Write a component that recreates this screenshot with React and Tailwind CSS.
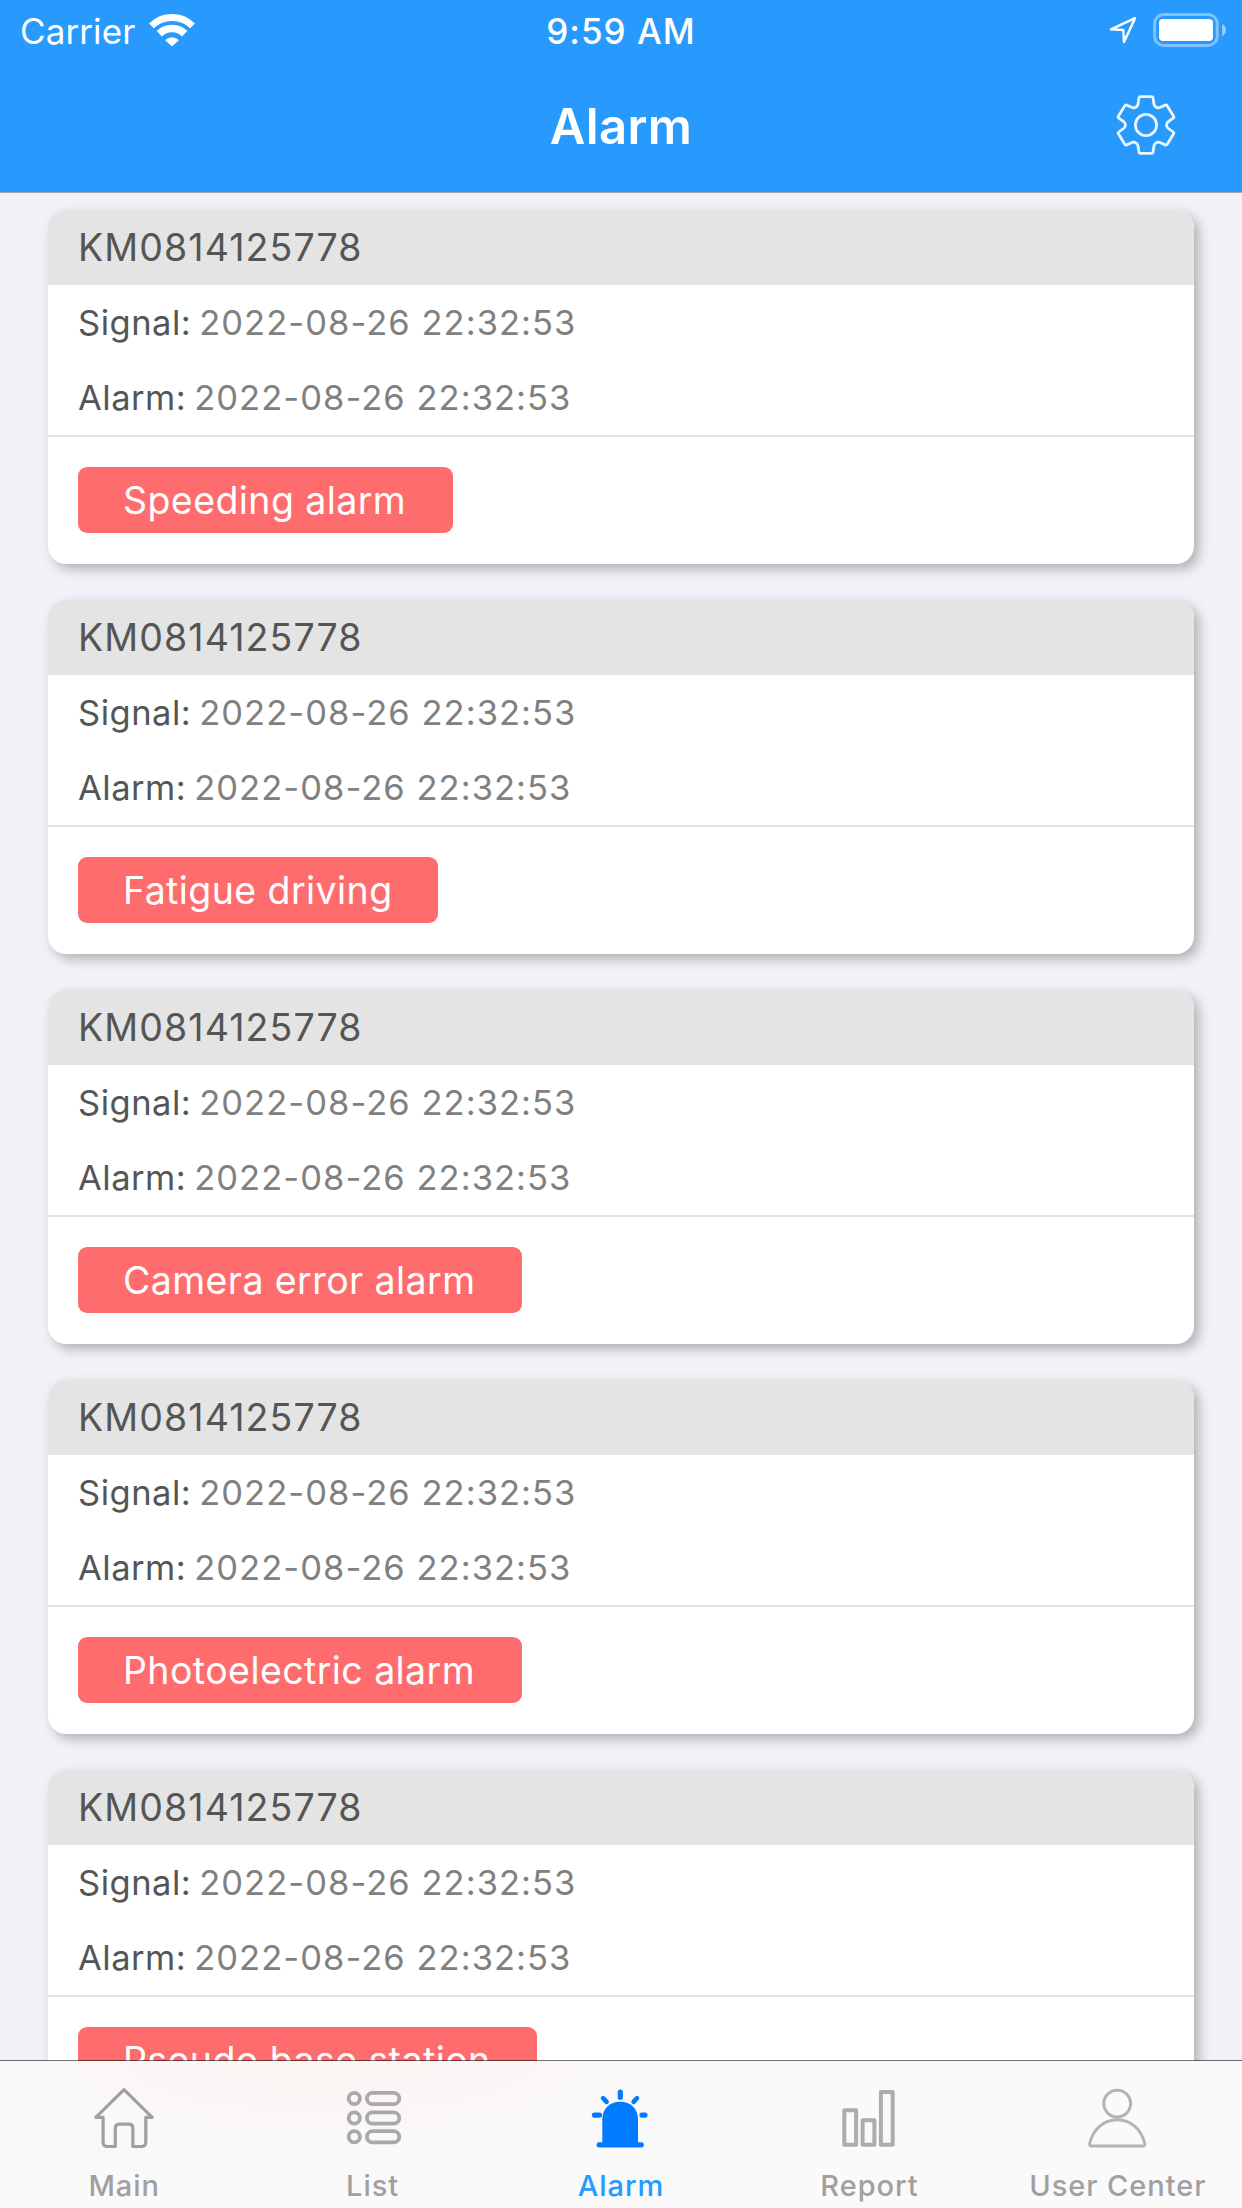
import React from "react";

const alarms = [
  { id: 1, device: "KM0814125778", signal: "2022-08-26 22:32:53", alarm: "2022-08-26 22:32:53", type: "Speeding alarm", width: "w-[375px]" },
  { id: 2, device: "KM0814125778", signal: "2022-08-26 22:32:53", alarm: "2022-08-26 22:32:53", type: "Fatigue driving", width: "w-[360px]" },
  { id: 3, device: "KM0814125778", signal: "2022-08-26 22:32:53", alarm: "2022-08-26 22:32:53", type: "Camera error alarm", width: "w-[444px]" },
  { id: 4, device: "KM0814125778", signal: "2022-08-26 22:32:53", alarm: "2022-08-26 22:32:53", type: "Photoelectric alarm", width: "w-[444px]" },
  { id: 5, device: "KM0814125778", signal: "2022-08-26 22:32:53", alarm: "2022-08-26 22:32:53", type: "Pseudo base station", width: "w-[459px]" },
];

/* ---------- Status bar icons ---------- */

const WifiIcon = () => (
  <svg className="w-[46px] h-[34px]" viewBox="0 0 46 34" fill="none" stroke="white">
    <path d="M2.4 12.9A29.4 29.4 0 0 1 43.6 12.9" strokeWidth="6.8" />
    <path d="M10.3 20.8A18 18 0 0 1 35.7 20.8" strokeWidth="7.6" />
    <path d="M16.6 27.2A9.8 9.8 0 0 1 29.4 27.2L23 33Z" fill="white" strokeWidth="0.8" strokeLinejoin="round" />
  </svg>
);

const LocationIcon = () => (
  <svg className="w-7 h-7" viewBox="0 0 28 28" fill="none" stroke="white" strokeWidth="2.4" strokeLinejoin="round">
    <path d="M26 2.2L2 13.4L14.3 14L15 26Z" />
  </svg>
);

const BatteryIcon = () => (
  <svg className="w-[74px] h-[34px]" viewBox="0 0 74 34">
    <rect x="1.6" y="1.6" width="62.6" height="30.8" rx="9" fill="none" stroke="white" strokeOpacity="0.4" strokeWidth="3" />
    <rect x="6" y="6" width="54" height="22" rx="4" fill="white" />
    <path d="M69 11C74.3 12.6 74.3 21.4 69 23Z" fill="white" fillOpacity="0.5" />
  </svg>
);

const GearIcon = () => (
  <svg className="w-[60px] h-[60px]" viewBox="0 0 60 60" fill="none" stroke="white" strokeWidth="2.8" strokeOpacity="0.9" strokeLinejoin="round">
    <path d="M24.3 1.6H35.7Q36.8 1.6 37 2.8L38 9.3Q38.3 11 39.8 11.9Q41.5 13.3 43.3 12.7L49.3 10.1Q50.5 9.7 51.2 10.8L57.6 21.3Q58.2 22.4 57.2 23.2L51.8 27Q50.6 28 50.6 30Q50.6 32 51.8 33L57.2 37Q58.2 37.8 57.6 38.8L51.2 49.3Q50.5 50.3 49.3 49.9L43.3 47.3Q41.5 46.7 39.8 48.1Q38.3 49 38 50.7L37 57.2Q36.8 58.4 35.7 58.4H24.3Q23.2 58.4 23 57.2L22 50.7Q21.7 49 20.2 48.1Q18.5 46.7 16.7 47.3L10.7 49.9Q9.5 50.3 8.8 49.3L2.4 38.8Q1.8 37.8 2.8 37L8.2 33Q9.4 32 9.4 30Q9.4 28 8.2 27L2.8 23.2Q1.8 22.4 2.4 21.3L8.8 10.8Q9.5 9.7 10.7 10.1L16.7 12.7Q18.5 13.3 20.2 11.9Q21.7 11 22 9.3L23 2.8Q23.2 1.6 24.3 1.6Z" />
    <circle cx="30" cy="30" r="10.6" />
  </svg>
);

/* ---------- Tab bar icons ---------- */

const HomeIcon = () => (
  <svg className="w-[60px] h-[60px]" viewBox="0 0 60 60" fill="none" stroke="#a0a0a0" strokeWidth="3.2" strokeLinejoin="round">
    <path d="M9.1 29.3H1.8L30 1.7L58.2 29.3H51.8V54Q51.8 58.5 47.3 58.5H38.9V40.5Q38.9 36.2 34.6 36.2H25.6Q21.3 36.2 21.3 40.5V58.5H13.6Q9.1 58.5 9.1 54Z" />
  </svg>
);

const ListIcon = () => (
  <svg className="w-[60px] h-[60px]" viewBox="0 0 60 60" fill="none" stroke="#a9a9a9" strokeWidth="3.8">
    {[10.5, 30, 48.7].map((y) => (
      <g key={y}>
        <circle cx="11.3" cy={y} r="5.6" />
        <rect x="23.9" y={y - 5.6} width="32.4" height="11.2" rx="5.6" />
      </g>
    ))}
  </svg>
);

const SirenIcon = () => (
  <svg className="w-[60px] h-[60px]" viewBox="0 0 60 60" fill="#007aff" stroke="#007aff" strokeLinecap="round">
    <path stroke="none" d="M11.3 55V31.5C11.3 21 18.5 13.7 29.2 13.7S47 21 47 31.5V55Z" />
    <rect stroke="none" x="5.6" y="54.2" width="47.2" height="5.4" rx="2.4" />
    <path strokeWidth="5.2" d="M29.3 4.2V9.2M3.4 27.1H8.5M51 27.1H54" />
    <path strokeWidth="4.6" d="M12.1 10.2L15.6 13.8M46 10.2L42.6 13.8" />
  </svg>
);

const ReportIcon = () => (
  <svg className="w-[60px] h-[60px]" viewBox="0 0 60 60" fill="none" stroke="#adadad" strokeWidth="4" strokeLinejoin="round">
    <rect x="5.3" y="22.3" width="11.8" height="34.5" />
    <rect x="23.6" y="32.2" width="11.8" height="24.6" />
    <rect x="41.9" y="4" width="11.8" height="52.8" />
  </svg>
);

const UserIcon = () => (
  <svg className="w-[60px] h-[60px]" viewBox="0 0 60 60" fill="none" stroke="#b4b4b4" strokeWidth="3" strokeLinejoin="round">
    <circle cx="29.2" cy="15.6" r="13.4" />
    <path d="M1.7 55.5C5 41.5 15.5 31.8 29.2 31.8S53.4 41.5 56.7 55.5Q57.2 58.1 54.8 58.1H3.6Q1.2 58.1 1.7 55.5Z" />
  </svg>
);

const tabs = [
  { name: "Main", Icon: HomeIcon },
  { name: "List", Icon: ListIcon },
  { name: "Alarm", Icon: SirenIcon, active: true },
  { name: "Report", Icon: ReportIcon },
  { name: "User Center", Icon: UserIcon },
];

function AlarmCard({ item }) {
  return (
    <article className="h-[354px] shrink-0 rounded-[18px] bg-white shadow-[5px_5px_12px_rgba(0,0,0,0.27)]">
      <h2 className="h-[75px] flex items-center pl-[30px] pt-[2px] rounded-t-[18px] bg-[#e4e4e4] text-[37.5px] tracking-[1.1px] text-[#555]">
        {item.device}
      </h2>
      <div className="border-b-2 border-[#e4e4e4] pl-[30px] text-[34.5px]">
        <p className="h-[75px] flex items-center gap-2">
          <span className="text-[#555] tracking-[0.5px]">Signal:</span>
          <span className="text-[#808080] tracking-[1.05px]">{item.signal}</span>
        </p>
        <p className="h-[75px] flex items-center gap-2">
          <span className="text-[#555] tracking-[0.5px]">Alarm:</span>
          <span className="text-[#808080] tracking-[1.05px]">{item.alarm}</span>
        </p>
      </div>
      <div className="pt-[30px] pl-[30px]">
        <div className={`h-[66px] flex items-center pl-[45px] pt-[2px] rounded-[9px] bg-[#ff6c6e] text-white text-[37.5px] tracking-[0.42px] whitespace-nowrap ${item.width}`}>
          {item.type}
        </div>
      </div>
    </article>
  );
}

export default function App() {
  return (
    <div className="w-[1242px] h-[2208px] flex flex-col overflow-hidden bg-[#f2f1f7] font-[Inter,sans-serif]">
      {/* Header */}
      <header className="shrink-0 bg-[#2899fd] text-white border-b border-[#a5a5ad]">
        <div className="h-[62px] grid grid-cols-[1fr_auto_1fr] items-center pl-5 pr-[15px] text-[35px]">
          <div className="flex items-center">
            <span className="tracking-[0.1px]">Carrier</span>
            <span className="ml-[14px] -mt-[3px]"><WifiIcon /></span>
          </div>
          <span className="pr-[5px] font-medium tracking-[1px]">9:59 AM</span>
          <div className="flex items-center justify-end gap-4 -mt-[2px]">
            <LocationIcon />
            <BatteryIcon />
          </div>
        </div>
        <div className="h-[130px] grid grid-cols-3 items-center px-[66px]">
          <span />
          <h1 className="text-center text-[49px] font-semibold tracking-[0.4px]">Alarm</h1>
          <button className="justify-self-end -mt-1"><GearIcon /></button>
        </div>
      </header>

      {/* Alarm list */}
      <main className="relative flex-1 min-h-0 overflow-hidden flex flex-col gap-9 px-12 pt-[17px]">
        {alarms.map((item) => (
          <AlarmCard key={item.id} item={item} />
        ))}
        <div className="absolute inset-x-0 bottom-0 h-px bg-black/55" />
      </main>

      {/* Tab bar */}
      <nav className="h-[147px] shrink-0 grid grid-cols-5 bg-[#fafafb] bg-[radial-gradient(ellipse_520px_130px_at_330px_0px,rgba(255,225,215,0.22),transparent)]">
        {tabs.map(({ name, Icon, active }) => (
          <div key={name} className="flex flex-col items-center pt-[27px]">
            <Icon />
            <span className={`mt-[20px] text-[29px] leading-[35px] font-medium tracking-[0.95px] whitespace-nowrap ${active ? "text-[#2899fd]" : "text-[#a0a0a0]"}`}>
              {name}
            </span>
          </div>
        ))}
      </nav>
    </div>
  );
}
